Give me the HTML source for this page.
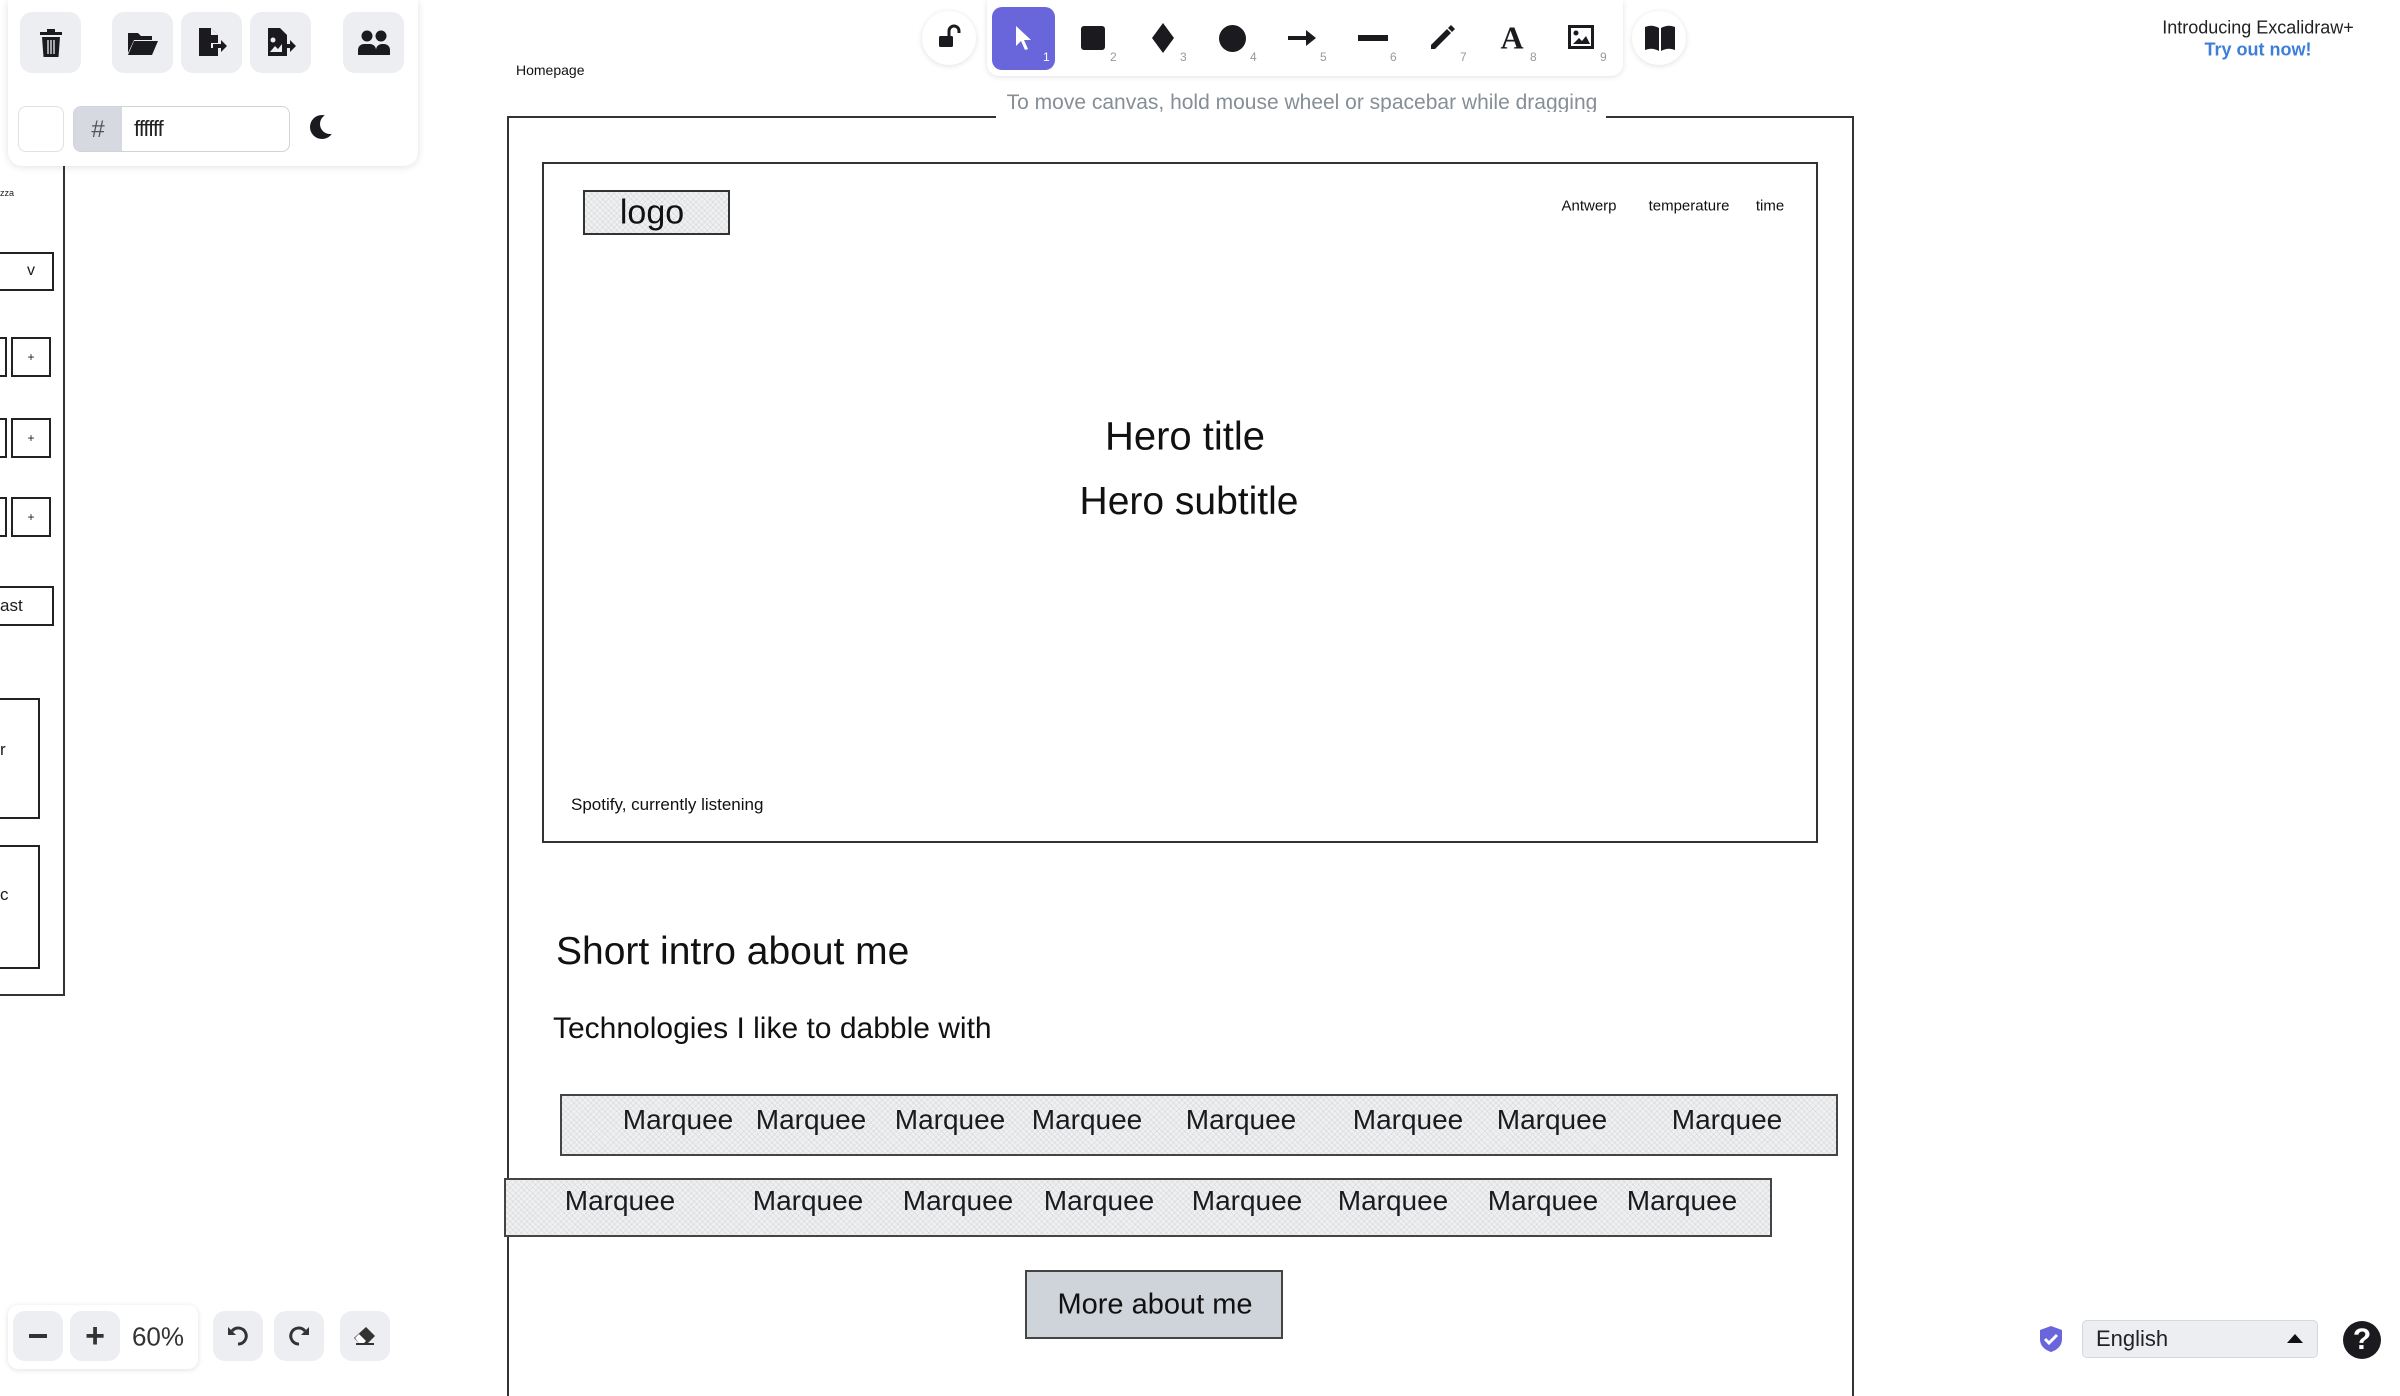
<!DOCTYPE html>
<html><head><meta charset="utf-8"><style>
*{margin:0;padding:0;box-sizing:border-box}
body{width:2400px;height:1373px;overflow:hidden;background:#fff;position:relative;font-family:"Liberation Sans",sans-serif;color:#1b1b1f}
.a{position:absolute}
.c{position:absolute;transform:translate(-50%,-50%);white-space:nowrap}
.hw{font-family:"Liberation Sans",sans-serif;color:#111}
.btn{position:absolute;background:#eceef2;border-radius:12px;display:flex;align-items:center;justify-content:center}
.sk{position:absolute;border:2px solid #222}
.hatch{background-color:#eef0f2;background-image:repeating-linear-gradient(45deg,rgba(0,0,0,.06) 0 1px,transparent 1px 4px),repeating-linear-gradient(-45deg,rgba(0,0,0,.05) 0 1px,transparent 1px 4px)}
.mq{position:absolute;transform:translate(-50%,-50%);font-size:28px;white-space:nowrap}
.num{position:absolute;font-size:12px;color:#999}
</style></head><body>

<!-- left sketch fragments -->
<div class="a" style="left:0;top:188px;font-size:9px">zza</div>
<div class="sk" style="left:-4px;top:252px;width:58px;height:39px"></div>
<div class="c" style="left:31px;top:271px;font-size:16px">v</div>
<div class="sk" style="left:-4px;top:337px;width:11px;height:40px"></div>
<div class="sk" style="left:11px;top:337px;width:40px;height:40px"></div><div class="c" style="left:31px;top:357px;font-size:12px">+</div>
<div class="sk" style="left:-4px;top:418px;width:11px;height:40px"></div>
<div class="sk" style="left:11px;top:418px;width:40px;height:40px"></div><div class="c" style="left:31px;top:438px;font-size:12px">+</div>
<div class="sk" style="left:-4px;top:497px;width:11px;height:40px"></div>
<div class="sk" style="left:11px;top:497px;width:40px;height:40px"></div><div class="c" style="left:31px;top:517px;font-size:12px">+</div>
<div class="sk" style="left:-4px;top:586px;width:58px;height:40px"></div>
<div class="a" style="left:0;top:596px;font-size:17px">ast</div>
<div class="sk" style="left:-4px;top:698px;width:44px;height:121px"></div>
<div class="a" style="left:0;top:740px;font-size:17px">r</div>
<div class="sk" style="left:-4px;top:845px;width:44px;height:124px"></div>
<div class="a" style="left:0;top:885px;font-size:17px">c</div>
<div class="a" style="left:63px;top:160px;width:2px;height:836px;background:#333"></div>
<div class="a" style="left:0;top:994px;width:65px;height:2px;background:#333"></div>

<!-- top-left panel -->
<div class="a" style="left:8px;top:0;width:410px;height:166px;background:#fff;border-radius:0 0 14px 14px;box-shadow:0 1px 8px rgba(0,0,0,.12)"></div>
<div class="btn" style="left:20px;top:12px;width:61px;height:61px"><svg width="22" height="28" viewBox="0 0 22 28"><rect x="0" y="3" width="22" height="3" fill="#1b1b1f"/><rect x="7" y="0" width="8" height="4" fill="#1b1b1f"/><path d="M2 8h18l-1.5 20h-15z" fill="#1b1b1f"/><path d="M8 11v14M11 11v14M14 11v14" stroke="#eceef2" stroke-width="1.3"/></svg></div>
<div class="btn" style="left:112px;top:12px;width:61px;height:61px"><svg width="30" height="24" viewBox="0 0 30 24"><path d="M0 2h10l3 3h11v4H6L0 22z" fill="#1b1b1f"/><path d="M6 10h24l-6 14H0z" fill="#1b1b1f"/></svg></div>
<div class="btn" style="left:181px;top:12px;width:61px;height:61px"><svg width="30" height="30" viewBox="0 0 30 30"><path d="M2 0h12l7 7v21H2z" fill="#1b1b1f"/><path d="M14 0v7h7" fill="#eceef2"/><rect x="14" y="15" width="10" height="5" fill="#eceef2"/><path d="M16 16h8v-4l6 6-6 6v-4h-8z" fill="#1b1b1f"/></svg></div>
<div class="btn" style="left:250px;top:12px;width:61px;height:61px"><svg width="30" height="30" viewBox="0 0 30 30"><path d="M2 0h12l7 7v21H2z" fill="#1b1b1f"/><circle cx="7" cy="12" r="2.5" fill="#eceef2"/><path d="M4 24l5-6 3 3 4-5v8z" fill="#eceef2"/><path d="M16 16h8v-4l6 6-6 6v-4h-8z" fill="#1b1b1f"/></svg></div>
<div class="btn" style="left:343px;top:12px;width:61px;height:61px"><svg width="32" height="26" viewBox="0 0 32 26"><circle cx="9" cy="6" r="5.5" fill="#1b1b1f"/><circle cx="23" cy="6" r="5.5" fill="#1b1b1f"/><path d="M0 25v-5a6 6 0 016-6h6a6 6 0 016 6v5z" fill="#1b1b1f"/><path d="M18 25v-5a6 6 0 016-6h2a6 6 0 016 6v5z" fill="#1b1b1f"/></svg></div>
<div class="a" style="left:18px;top:106px;width:46px;height:46px;border:1px solid #dee2e6;border-radius:8px;background:#fff"></div>
<div class="a" style="left:73px;top:106px;width:217px;height:46px;border:1px solid #ced4da;border-radius:8px;overflow:hidden;background:#fff">
  <div class="a" style="left:0;top:0;width:48px;height:46px;background:#d6dae0;color:#555;font-size:24px;display:flex;align-items:center;justify-content:center">#</div>
  <div class="a" style="left:60px;top:9px;font-size:22px;color:#222;letter-spacing:-1px">ffffff</div>
</div>
<svg class="a" style="left:308px;top:112px" width="30" height="30" viewBox="0 0 30 30"><circle cx="14" cy="15" r="12" fill="#1b1b1f"/><circle cx="22" cy="12" r="10" fill="#fff"/></svg>

<!-- top toolbar -->
<div class="a" style="left:922px;top:11px;width:54px;height:54px;border-radius:50%;background:#fff;box-shadow:0 1px 6px rgba(0,0,0,.12)"></div>
<svg class="a" style="left:937px;top:24px" width="26" height="26" viewBox="0 0 26 26"><rect x="2" y="12" width="14" height="11" rx="1.5" fill="#1b1b1f"/><path d="M12 12V7a5 5 0 0110 0v2" stroke="#1b1b1f" stroke-width="3" fill="none"/></svg>
<div class="a" style="left:987px;top:0;width:636px;height:76px;background:#fff;border-radius:0 0 12px 12px;box-shadow:0 1px 6px rgba(0,0,0,.12)"></div>
<div class="a" style="left:992px;top:7px;width:63px;height:63px;background:#6965db;border-radius:10px"></div>
<svg class="a" style="left:1014px;top:25px" width="18" height="26" viewBox="0 0 18 26"><path d="M2 1v20l5-5 4 9 3-1-4-9h7z" fill="#fff"/></svg>
<div class="num" style="left:1043px;top:50px;color:#fff">1</div>
<div class="a" style="left:1081px;top:26px;width:24px;height:24px;background:#1b1b1f;border-radius:3px"></div><div class="num" style="left:1110px;top:50px">2</div>
<svg class="a" style="left:1150px;top:23px" width="26" height="30" viewBox="0 0 26 30"><path d="M13 0l11 15-11 15L2 15z" fill="#1b1b1f"/></svg><div class="num" style="left:1180px;top:50px">3</div>
<div class="a" style="left:1219px;top:25px;width:27px;height:27px;background:#1b1b1f;border-radius:50%"></div><div class="num" style="left:1250px;top:50px">4</div>
<svg class="a" style="left:1288px;top:30px" width="28" height="16" viewBox="0 0 28 16"><path d="M0 6h18V0l10 8-10 8v-6H0z" fill="#1b1b1f"/></svg><div class="num" style="left:1320px;top:50px">5</div>
<div class="a" style="left:1358px;top:35px;width:30px;height:6px;background:#1b1b1f"></div><div class="num" style="left:1390px;top:50px">6</div>
<svg class="a" style="left:1428px;top:24px" width="28" height="28" viewBox="0 0 28 28"><path d="M3 21L19 5l4 4L7 25H3z" fill="#1b1b1f"/><path d="M20 4l3-3 4 4-3 3z" fill="#1b1b1f"/></svg><div class="num" style="left:1460px;top:50px">7</div>
<div class="c" style="left:1512px;top:38px;font-size:32px;font-weight:bold;font-family:'Liberation Serif',serif">A</div><div class="num" style="left:1530px;top:50px">8</div>
<svg class="a" style="left:1568px;top:25px" width="26" height="24" viewBox="0 0 26 24"><rect x="1.5" y="1.5" width="23" height="21" fill="none" stroke="#1b1b1f" stroke-width="3"/><circle cx="8" cy="8" r="2.5" fill="#1b1b1f"/><path d="M5 19l6-6 3 3 4-5 4 8z" fill="#1b1b1f"/></svg><div class="num" style="left:1600px;top:50px">9</div>
<div class="a" style="left:1632px;top:11px;width:54px;height:54px;border-radius:50%;background:#fff;box-shadow:0 1px 6px rgba(0,0,0,.12)"></div>
<svg class="a" style="left:1645px;top:25px" width="30" height="26" viewBox="0 0 30 26"><path d="M0 2q7-3 14 1v23q-7-4-14-1z" fill="#1b1b1f"/><path d="M30 2q-7-3-14 1v23q7-4 14-1z" fill="#1b1b1f"/></svg>
<div class="c" style="left:1302px;top:103px;font-size:21px;color:#868e96;background:#fff;padding:0 8px">To move canvas, hold mouse wheel or spacebar while dragging</div>

<div class="c" style="left:2258px;top:28px;font-size:18px;color:#222">Introducing Excalidraw+</div>
<div class="c" style="left:2258px;top:50px;font-size:18px;color:#3d7edb;font-weight:bold">Try out now!</div>

<!-- canvas drawing -->
<div class="a hw" style="left:516px;top:62px;font-size:14px">Homepage</div>
<div class="a" style="left:507px;top:116px;width:1347px;height:1280px;border:2px solid #333;border-bottom:none"></div>
<div class="a" style="left:996px;top:112px;width:610px;height:8px;background:#fff"></div>
<div class="a" style="left:542px;top:162px;width:1276px;height:681px;border:2px solid #333"></div>
<div class="a hatch" style="left:583px;top:190px;width:147px;height:45px;border:2px solid #333"></div>
<div class="c hw" style="left:652px;top:213px;font-size:34px">logo</div>
<div class="c hw" style="left:1589px;top:206px;font-size:15px">Antwerp</div>
<div class="c hw" style="left:1689px;top:206px;font-size:15px">temperature</div>
<div class="c hw" style="left:1770px;top:206px;font-size:15px">time</div>
<div class="c hw" style="left:1185px;top:437px;font-size:40px">Hero title</div>
<div class="c hw" style="left:1189px;top:502px;font-size:39px">Hero subtitle</div>
<div class="a hw" style="left:571px;top:795px;font-size:17px">Spotify, currently listening</div>
<div class="a hw" style="left:556px;top:930px;font-size:39px">Short intro about me</div>
<div class="a hw" style="left:553px;top:1012px;font-size:30px">Technologies I like to dabble with</div>

<div class="a hatch" style="left:560px;top:1094px;width:1278px;height:62px;border:2px solid #444"></div>
<div class="mq" style="left:678px;top:1120px">Marquee</div><div class="mq" style="left:811px;top:1120px">Marquee</div><div class="mq" style="left:950px;top:1120px">Marquee</div><div class="mq" style="left:1087px;top:1120px">Marquee</div><div class="mq" style="left:1241px;top:1120px">Marquee</div><div class="mq" style="left:1408px;top:1120px">Marquee</div><div class="mq" style="left:1552px;top:1120px">Marquee</div><div class="mq" style="left:1727px;top:1120px">Marquee</div>
<div class="a hatch" style="left:504px;top:1178px;width:1268px;height:59px;border:2px solid #444"></div>
<div class="mq" style="left:620px;top:1201px">Marquee</div><div class="mq" style="left:808px;top:1201px">Marquee</div><div class="mq" style="left:958px;top:1201px">Marquee</div><div class="mq" style="left:1099px;top:1201px">Marquee</div><div class="mq" style="left:1247px;top:1201px">Marquee</div><div class="mq" style="left:1393px;top:1201px">Marquee</div><div class="mq" style="left:1543px;top:1201px">Marquee</div><div class="mq" style="left:1682px;top:1201px">Marquee</div>
<div class="a" style="left:1025px;top:1270px;width:258px;height:69px;border:2px solid #444;background:#ced4da"></div>
<div class="c hw" style="left:1155px;top:1305px;font-size:29px">More about me</div>

<!-- bottom left -->
<div class="a" style="left:8px;top:1305px;width:190px;height:64px;background:#fff;border-radius:10px;box-shadow:0 1px 6px rgba(0,0,0,.12)"></div>
<div class="btn" style="left:13px;top:1311px;width:50px;height:50px"><div style="width:18px;height:3.5px;background:#333"></div></div>
<div class="btn" style="left:70px;top:1311px;width:50px;height:50px;font-size:34px;color:#333;font-weight:bold">+</div>
<div class="c" style="left:158px;top:1337px;font-size:26px;color:#333">60%</div>
<div class="btn" style="left:213px;top:1311px;width:50px;height:50px"><svg width="22" height="22" viewBox="0 0 22 22"><path d="M5 6A8 8 0 1111 19" fill="none" stroke="#333" stroke-width="3"/><path d="M1 2v8h8z" fill="#333"/></svg></div>
<div class="btn" style="left:274px;top:1311px;width:50px;height:50px"><svg width="22" height="22" viewBox="0 0 22 22"><path d="M17 6A8 8 0 1011 19" fill="none" stroke="#333" stroke-width="3"/><path d="M21 2v8h-8z" fill="#333"/></svg></div>
<div class="btn" style="left:340px;top:1311px;width:50px;height:50px"><svg width="24" height="20" viewBox="0 0 24 20"><path d="M13 1l9 9-7 7H6l-5-5z" fill="#333"/><path d="M6 8l7 7-2 2H6l-4-5z" fill="#fff"/><path d="M3 18h18" stroke="#333" stroke-width="2"/></svg></div>

<!-- bottom right -->
<svg class="a" style="left:2038px;top:1325px" width="26" height="28" viewBox="0 0 26 28"><path d="M13 1l11 4v9c0 7-5 11-11 13C7 25 2 21 2 14V5z" fill="#6965db"/><path d="M7 14l4 4 8-8" stroke="#fff" stroke-width="3" fill="none"/></svg>
<div class="a" style="left:2082px;top:1320px;width:236px;height:38px;background:#eceef2;border:1px solid #d5d8dd;border-radius:5px"></div>
<div class="a" style="left:2096px;top:1326px;font-size:22px;color:#222">English</div>
<svg class="a" style="left:2287px;top:1333px" width="16" height="10" viewBox="0 0 16 10"><path d="M0 10L8 1l8 9z" fill="#111"/></svg>
<div class="a" style="left:2343px;top:1321px;width:38px;height:38px;border-radius:50%;background:#1b1b1f;color:#fff;font-size:30px;font-weight:bold;text-align:center;line-height:38px">?</div>
</body></html>
